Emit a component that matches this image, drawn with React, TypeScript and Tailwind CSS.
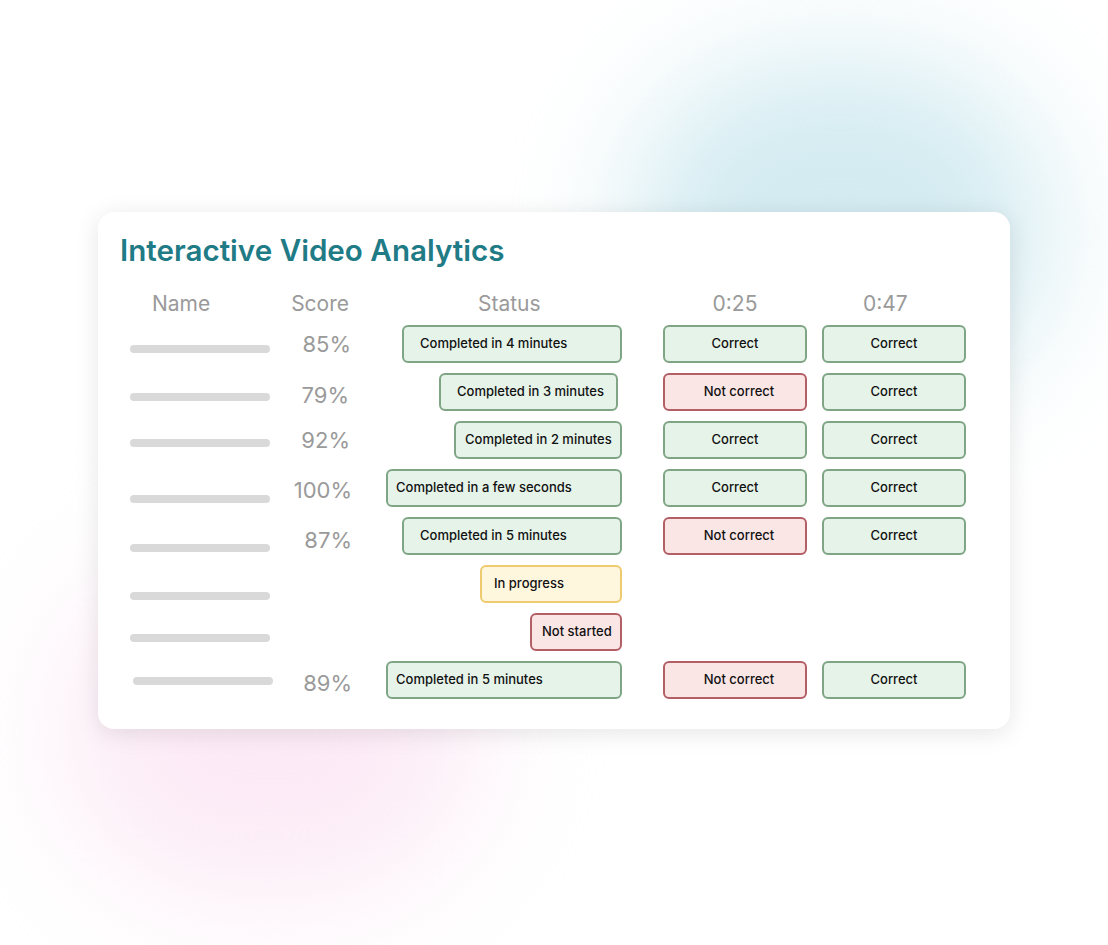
type Tone = 'green' | 'red' | 'yellow';

type Row = {
  barCls: string;
  score?: string;
  scoreCls: string;
  status: string;
  tone: Tone;
  statusCls: string;
  a?: boolean;
  b?: boolean;
};

const TONES: Record<Tone, string> = {
  green: 'bg-[#e6f3e9] border-[#7fa585]',
  red: 'bg-[#fbe6e6] border-[#b35f66]',
  yellow: 'bg-[#fff6de] border-[#efca6e]',
};

// offsets follow the screenshot; the rows are not perfectly aligned there
const ROWS: Row[] = [
  { barCls: 'mt-[25px]', score: '85%', scoreCls: 'mt-[10px] pr-[1px]', status: 'Completed in 4 minutes', tone: 'green', statusCls: 'w-[220px] pl-4', a: true, b: true },
  { barCls: 'mt-[25px]', score: '79%', scoreCls: 'mt-[13px] pr-[3px]', status: 'Completed in 3 minutes', tone: 'green', statusCls: 'w-[179px] pl-4 mr-[4px]', a: false, b: true },
  { barCls: 'mt-[23px]', score: '92%', scoreCls: 'mt-[10px] pr-[2px]', status: 'Completed in 2 minutes', tone: 'green', statusCls: 'w-[168px] pl-[9px]', a: true, b: true },
  { barCls: 'mt-[31px]', score: '100%', scoreCls: 'mt-[12px]', status: 'Completed in a few seconds', tone: 'green', statusCls: 'w-[236px] pl-2', a: true, b: true },
  { barCls: 'mt-[32px]', score: '87%', scoreCls: 'mt-[14px]', status: 'Completed in 5 minutes', tone: 'green', statusCls: 'w-[220px] pl-4', a: false, b: true },
  { barCls: 'mt-[32px]', scoreCls: '', status: 'In progress', tone: 'yellow', statusCls: 'w-[142px] pl-3' },
  { barCls: 'mt-[26px]', scoreCls: '', status: 'Not started', tone: 'red', statusCls: 'w-[92px] pl-[10px]' },
  { barCls: 'mt-[21px] ml-[3px]', score: '89%', scoreCls: 'mt-[13px]', status: 'Completed in 5 minutes', tone: 'green', statusCls: 'w-[236px] pl-2', a: false, b: true },
];

function Answer({ ok }: { ok?: boolean }) {
  if (ok === undefined) return <div />;
  return (
    <div
      className={`flex h-[38px] w-[144px] items-center justify-center rounded-[6px] border-2 text-[13px] font-medium text-[#111] ${
        ok ? TONES.green : `${TONES.red} pl-2`
      }`}
    >
      {ok ? 'Correct' : 'Not correct'}
    </div>
  );
}

export default function App() {
  return (
    <div
      className="relative min-h-[945px] w-full overflow-hidden bg-white"
      style={{ fontFamily: 'Inter, "Noto Sans", sans-serif' }}
    >
      {/* soft colour blobs behind the card */}
      <div className="absolute left-[630px] top-[60px] h-[340px] w-[420px] rounded-full bg-[#d3ebf1] blur-[60px]" />
      <div className="absolute left-[60px] top-[560px] h-[340px] w-[420px] rounded-full bg-[#fcebf6] blur-[60px]" />

      <div className="relative pl-[98px] pt-[212px]">
        <div className="h-[517px] w-[912px] rounded-[16px] bg-white pt-[20px] shadow-[0_4px_24px_rgba(0,0,0,0.10)]">
          <h1 className="pl-[22px] text-[29.6px] font-semibold leading-[36px] text-[#1f7b86]">
            Interactive Video Analytics
          </h1>

          <div className="mt-[20px] grid grid-cols-[140px_82px_270px_144px_144px] pl-[32px]">
            {/* header */}
            <div className="col-span-5 grid h-[32px] grid-cols-[140px_82px_270px_41px_144px_15px_144px] items-center text-[21px] leading-[28px] text-[#9a9a9a]">
              <div className="pl-[22px]">Name</div>
              <div className="pr-[3px] text-right">Score</div>
              <div className="pl-[126px]">Status</div>
              <div />
              <div className="text-center">0:25</div>
              <div />
              <div className="pl-[41px]">0:47</div>
            </div>

            {ROWS.map((r, i) => (
              <div key={i} className="col-span-5 grid h-12 grid-cols-[140px_82px_270px_41px_144px_15px_144px]">
                <div className={`h-2 w-[140px] self-start rounded-full bg-[#d9d9d9] ${r.barCls}`} />
                <div className={`self-start text-right text-[22px] leading-[28px] text-[#9a9a9a] ${r.scoreCls}`}>
                  {r.score}
                </div>
                <div className="flex items-center justify-end">
                  <div
                    className={`flex h-[38px] items-center rounded-[6px] border-2 text-[13px] font-medium text-[#111] ${TONES[r.tone]} ${r.statusCls}`}
                  >
                    {r.status}
                  </div>
                </div>
                <div />
                <div className="flex items-center">
                  <Answer ok={r.a} />
                </div>
                <div />
                <div className="flex items-center">
                  <Answer ok={r.b} />
                </div>
              </div>
            ))}
          </div>
        </div>
      </div>
    </div>
  );
}
